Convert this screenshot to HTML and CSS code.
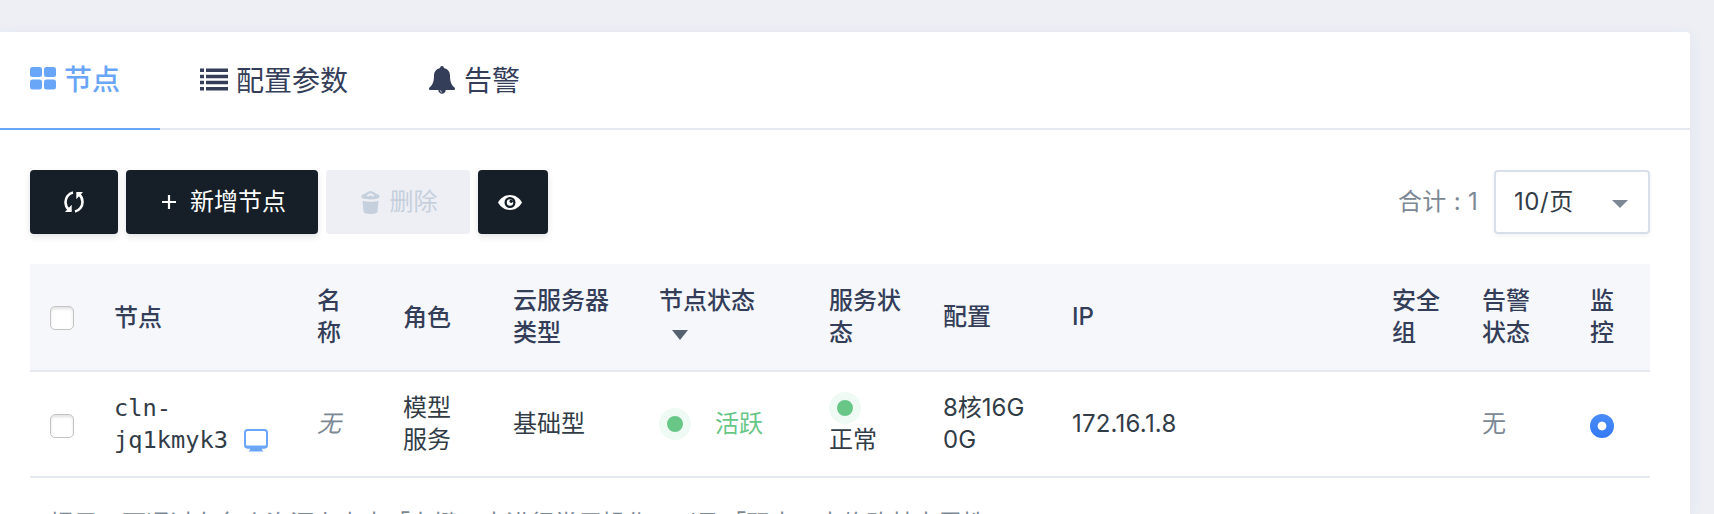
FILE: index.html
```html
<!DOCTYPE html>
<html lang="zh-CN">
<head>
<meta charset="utf-8">
<title>节点</title>
<link rel="stylesheet" href="styles.css">
</head>
<body>
<main class="panel">
  <nav class="tabs">
    <a class="tab active">
      <svg width="26" height="24" viewBox="0 0 26 24" fill="currentColor"><rect width="12" height="10" rx="2.5"/><rect x="14" width="12" height="10" rx="2.5"/><rect y="12.500" width="12" height="10" rx="2.5"/><rect x="14" y="12.500" width="12" height="10" rx="2.5"/></svg>
      <span>节点</span>
    </a>
    <a class="tab params">
      <svg width="28" height="24" viewBox="0 0 28 24" fill="currentColor"><path d="M0 .5h4v3.500H0zM6 .5h22v3.500H6zM0 6.700h4v3.500H0zM6 6.700h22v3.500H6zM0 12.800h4v3.500H0zM6 12.800h22v3.500H6zM0 19h4v3.500H0zM6 19h22v3.500H6z"/></svg>
      <span>配置参数</span>
    </a>
    <a class="tab alarm">
      <svg width="26" height="28" viewBox="0 0 26 28" fill="currentColor"><path d="M13 0c1.200 0 1.900.8 1.900 1.900C18.700 2.800 21 5.500 21 9.500c0 6.500 1.500 9.500 4.500 12 .9.900.5 2.500-.7 2.500H1.200C0 24-.4 22.400.5 21.500 3.500 19 5 16 5 9.500c0-4 2.300-6.700 6.100-7.600C11.100.8 11.800 0 13 0z"/><path d="M9.300 24h7.400c0 2-1.600 3.700-3.700 3.700S9.300 26 9.300 24z"/><path d="M11.200 24.300c.1 1 .8 1.700 1.800 1.800" fill="none" stroke="#fff" stroke-width=".8"/></svg>
      <span>告警</span>
    </a>
  </nav>

  <div class="toolbar">
    <button class="btn refresh">
      <svg width="20" height="22" viewBox="0 0 20 22"><g fill="none" stroke="#fff" stroke-width="2.600"><path d="M9 1.500C4.500 2.500 1.500 6.500 1.500 11c0 3 1 5.500 3.200 7.500"/><path d="M11 20.500c4.500-1 7.500-5 7.500-9.500 0-3-1-5.500-3.200-7.500"/></g><path fill="#fff" d="M7.700 13.800V21H1zM12.300 8.200V1H19z"/></svg>
    </button>
    <button class="btn add">
      <svg width="14" height="14" viewBox="0 0 14 14"><path d="M7 0v14M0 7h14" stroke="#fff" stroke-width="2.200"/></svg>
      <span>新增节点</span>
    </button>
    <button class="btn remove" disabled>
      <svg width="19" height="23" viewBox="0 0 19 23" fill="currentColor"><path fill-rule="evenodd" d="M.3 5.600C.3 4 2.500 3 4.500 2.600 6 1 7.800 0 9.500 0s3.500 1 5 2.600c2 .4 4.200 1.400 4.200 3C18.700 7.500 14.500 8.500 9.500 8.500S.3 7.500.3 5.600zM5.500 5C7 3.200 8.300 2.300 9.500 2.300s2.500.9 4 2.700l-1.800.6-2.200-1.300-2.200 1.300z"/><path d="M1.500 9.700c4.500 1.300 11.500 1.300 16 0L16.500 20.500c-.2 1.700-3.200 2.500-7 2.500S2.700 22.200 2.500 20.500z"/></svg>
      <span>删除</span>
    </button>
    <button class="btn view">
      <svg width="24" height="15" viewBox="0 0 24 15"><path fill="#fff" d="M0 7.500C2.800 2.700 7 0 12 0s9.200 2.700 12 7.500C21.200 12.300 17 15 12 15S2.800 12.300 0 7.500z"/><circle cx="12" cy="7.500" r="5.500" fill="#161f27"/><circle cx="12" cy="7.500" r="3.200" fill="#fff"/><circle cx="13.200" cy="6.200" r="1.700" fill="#161f27"/></svg>
    </button>
    <div class="pager">
      <span class="total">合计 : 1</span>
      <div class="select"><span>10/页</span><i class="caret"></i></div>
    </div>
  </div>

  <table class="grid">
    <colgroup><col class="c-check"><col class="c-node"><col class="c-name"><col class="c-role"><col class="c-type"><col class="c-state"><col class="c-service"><col class="c-config"><col class="c-ip"><col class="c-group"><col class="c-alarm"><col class="c-monitor"></colgroup>
    <thead>
      <tr>
        <th class="low"><i class="checkbox"></i></th><th class="low">节点</th><th>名<br>称</th><th class="low">角色</th><th>云服务器<br>类型</th>
        <th>节点状态<div class="sort"><i></i></div></th><th>服务状<br>态</th><th>配置</th><th>IP</th><th>安全<br>组</th><th>告警<br>状态</th><th>监<br>控</th>
      </tr>
    </thead>
    <tbody>
      <tr>
        <td class="low"><i class="checkbox"></i></td>
        <td class="mono">cln-<br>jq1kmyk3<svg class="screen" width="24" height="23" viewBox="0 0 24 23"><rect x="1" y="1" width="22" height="17.500" rx="2.500" fill="none" stroke="#6aa6f8" stroke-width="2"/><path fill="#6aa6f8" d="M1 16.500h22c0 2-.8 3-2.500 3H18v1.200l1.500 1.800h-15L6 20.700v-1.200H3.500c-1.700 0-2.500-1-2.500-3z"/></svg></td>
        <td class="muted"><em>无</em></td>
        <td>模型<br>服务</td>
        <td>基础型</td>
        <td class="active-state"><i class="dot"></i><span>活跃</span></td>
        <td><div class="service"><i class="dot"></i></div>正常</td>
        <td>8核16G<br>0G</td>
        <td class="ip">172.16.1.8</td>
        <td></td>
        <td class="muted">无</td>
        <td class="low"><i class="radio"></i></td>
      </tr>
    </tbody>
  </table>
  <p class="hint">提示：可通过在各个资源上点击「右键」来进行常用操作，以及「双击」来修改基本属性。</p>
</main>
</body>
</html>
```
FILE: styles.css
```css
* { box-sizing: border-box; }
html, body { height: 100%; overflow: hidden; }
body {
  margin: 0;
  padding-top: 32px;
  background: #edeff5;
  color: #323c47;
  font: 24px/32px Inter, "Noto Sans CJK SC", sans-serif;
}
i { font-style: normal; }
svg { display: block; flex: none; }
.panel {
  width: 1690px;
  height: 482px;
  overflow: hidden;
  background: #fff;
  border-radius: 0 4px 0 0;
  box-shadow: 0 4px 16px rgba(40, 80, 130, .07);
}
.tabs {
  display: flex;
  height: 98px;
  border-bottom: 2px solid #e4eaf0;
  color: #343e59;
  font-size: 28px;
}
.tab { display: flex; align-items: center; gap: 8px; height: 98px; padding-left: 40px; }
.tab.active { width: 160px; padding-left: 30px; border-bottom: 2px solid #6aa6f8; color: #6aa6f8; font-weight: 500; }
.tab svg { margin-top: -2px; }
.tab.alarm { padding-left: 81px; gap: 9px; }
.toolbar { display: flex; gap: 8px; padding: 40px 40px 0 30px; }
.btn {
  display: flex;
  align-items: center;
  justify-content: center;
  height: 64px;
  padding: 0;
  border: 0;
  border-radius: 4px;
  background: #161f27;
  color: #fff;
  font: inherit;
  box-shadow: 0 3px 6px rgba(20, 30, 40, .12);
}
.refresh { width: 88px; }
.add { width: 192px; padding-left: 4px; gap: 14px; }
.remove { width: 144px; padding-left: 2px; gap: 10px; background: #edeff5; color: #c6d0dc; box-shadow: none; }
.view { width: 70px; padding-right: 6px; }
.pager { display: flex; align-items: center; gap: 16px; margin-left: auto; }
.total { color: #7c8894; letter-spacing: .3px; }
.select {
  display: flex;
  align-items: center;
  justify-content: space-between;
  width: 156px;
  height: 64px;
  padding: 0 20px 0 18px;
  border: 2px solid #d8dfe9;
  border-radius: 4px;
  box-shadow: 0 2px 4px rgba(20, 30, 40, .06);
  letter-spacing: .6px;
}
.caret { border: 8px solid transparent; border-top-color: #7c8894; border-bottom: 0; margin-top: 3px; }
.grid { width: 1620px; margin: 30px 0 0 30px; border-collapse: separate; border-spacing: 0; table-layout: fixed; }
.c-check { width: 64px; }
.c-node { width: 203px; }
.c-name { width: 86px; }
.c-role { width: 110px; }
.c-type { width: 146px; }
.c-state { width: 170px; }
.c-service { width: 114px; }
.c-config { width: 129px; }
.c-ip { width: 320px; }
.c-group { width: 90px; }
.c-alarm { width: 108px; }
.c-monitor { width: 80px; }
th, td { padding: 0 0 0 20px; text-align: left; vertical-align: middle; white-space: nowrap; }
th { height: 108px; background: #f5f7fb; border-bottom: 2px solid #e4eaf0; color: #343e59; font-weight: 500; }
td { height: 106px; border-bottom: 2px solid #e4eaf0; }
th.low { padding-top: 2px; }
td.low { padding-top: 4px; }
.checkbox {
  display: block;
  width: 24px;
  height: 24px;
  border: 1px solid #c4c4c4;
  border-radius: 5px;
  background: #fff;
  box-shadow: inset 0 2px 3px rgba(0, 0, 0, .12);
}
.sort { height: 32px; padding: 13px 0 0 13px; }
.sort i { display: block; width: 0; border: 8px solid transparent; border-top: 10px solid #56616f; border-bottom: 0; }
.mono { font-family: "DejaVu Sans Mono", monospace; font-size: 23.700px; }
.screen { display: inline-block; margin-left: 16px; vertical-align: -4px; }
.muted { color: #7c8894; }
.dot { display: inline-block; width: 32px; height: 32px; border: 8px solid #effaf4; border-radius: 50%; background: #68c687; vertical-align: top; }
.active-state { color: #68c687; }
.active-state span { margin-left: 24px; }
.service { height: 32px; }
.ip { letter-spacing: .2px; }
.radio { display: block; width: 24px; height: 24px; border-radius: 50%; background: radial-gradient(circle, #fff 4px, transparent 4.800px), linear-gradient(#4a8df8, #3478f6); }
.hint { margin: 30px 0 0 50px; color: #7c8894; white-space: nowrap; }
```
